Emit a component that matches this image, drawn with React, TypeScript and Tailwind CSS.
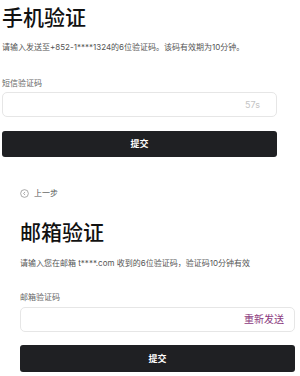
const font = {
  fontFamily: '"Inter", "Noto Sans CJK SC", sans-serif',
};

function BackIcon() {
  return (
    <svg width="9" height="9" viewBox="0 0 10 10" fill="none">
      <circle cx="5" cy="5" r="4.3" stroke="#8a8a8a" strokeWidth="0.8" />
      <path d="M5.6 3.3 L4 5 L5.6 6.7" stroke="#8a8a8a" strokeWidth="0.8" />
    </svg>
  );
}

export default function App() {
  return (
    <div
      className="w-[300px] h-[376px] overflow-hidden bg-white text-[#111]"
      style={font}
    >
      {/* 手机验证 */}
      <div className="ml-[2px] w-[275px] pt-[4px]">
        <h1 className="text-[21px] leading-[28px] font-medium">手机验证</h1>
        <p className="mt-[9px] text-[8px] leading-[12px] text-[#555]">
          请输入发送至+852-1****1324的6位验证码。该码有效期为10分钟。
        </p>
        <div className="mt-[24px] text-[8px] leading-[12px] text-[#666]">
          短信验证码
        </div>
        <div className="mt-[3px] h-[25px] rounded-[5px] border border-[#e6e6e6] flex items-center justify-end pr-[16px]">
          <span className="text-[9px] text-[#c4c4c4]">57s</span>
        </div>
        <button className="mt-[14px] w-full h-[26px] rounded-[3px] bg-[#1f2023] text-white text-[9px] font-bold">
          提交
        </button>
      </div>

      {/* 邮箱验证 */}
      <div className="ml-[20px] w-[275px]">
        <div className="mt-[30px] flex items-center gap-[5px] text-[8px] leading-[12px] text-[#555]">
          <BackIcon />
          <span>上一步</span>
        </div>
        <h1 className="mt-[20px] text-[21px] leading-[28px] font-medium">邮箱验证</h1>
        <p className="mt-[10px] text-[8px] leading-[12px] text-[#555]">
          请输入您在邮箱 t****.com 收到的6位验证码，验证码10分钟有效
        </p>
        <div className="mt-[22px] text-[8px] leading-[12px] text-[#666]">
          邮箱验证码
        </div>
        <div className="mt-[4px] h-[25px] rounded-[5px] border border-[#e6e6e6] flex items-center justify-end pr-[10px]">
          <span className="text-[10px] text-[#8b3a7e]">重新发送</span>
        </div>
        <button className="mt-[13px] w-full h-[27px] rounded-[3px] bg-[#1f2023] text-white text-[9px] font-bold">
          提交
        </button>
      </div>
    </div>
  );
}
